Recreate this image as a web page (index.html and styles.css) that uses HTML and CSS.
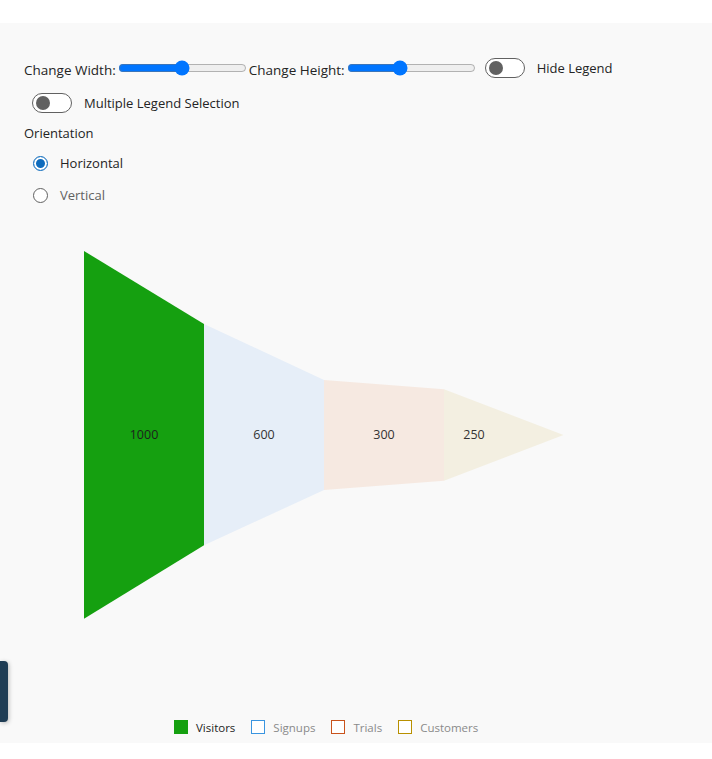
FILE: index.html
```html
<!DOCTYPE html>
<html>
<head>
<meta charset="utf-8">
<link rel="stylesheet" href="styles.css">
</head>
<body>
<div class="panel">
  <div class="row row-top">
    <span class="lbl">Change Width:</span>
    <input class="range" type="range" min="0" max="100" value="50">
    <span class="lbl">Change Height:</span>
    <input class="range" type="range" min="0" max="100" value="40">
    <span class="switch"><span class="knob"></span></span>
    <span class="switch-lbl">Hide Legend</span>
  </div>
  <div class="row row-multi">
    <span class="switch"><span class="knob"></span></span>
    <span class="switch-lbl">Multiple Legend Selection</span>
  </div>
  <div class="orient">Orientation</div>
  <div class="radio-row">
    <span class="radio checked"></span>
    <span class="radio-lbl">Horizontal</span>
  </div>
  <div class="radio-row">
    <span class="radio"></span>
    <span class="radio-lbl muted">Vertical</span>
  </div>
  <svg class="chart" width="712" height="512" viewBox="0 0 712 512">
    <polygon points="84,46 204,119 204,340.3 84,413.7" fill="#15a010"/>
    <polygon points="204,119 324,175 324,285 204,340.3" fill="#e6eef8"/>
    <polygon points="324,175 444,184.3 444,275.7 324,285" fill="#f6e9e1"/>
    <polygon points="444,184.3 563.5,230 444,275.7" fill="#f3efe1"/>
    <text x="144" y="233.5" class="val dark">1000</text>
    <text x="264" y="233.5" class="val">600</text>
    <text x="384" y="233.5" class="val">300</text>
    <text x="474" y="233.5" class="val">250</text>
  </svg>
  <div class="legend">
    <span class="lg-item"><span class="sw sw-green"></span><span class="lg-text on">Visitors</span></span>
    <span class="lg-item"><span class="sw sw-blue"></span><span class="lg-text">Signups</span></span>
    <span class="lg-item"><span class="sw sw-orange"></span><span class="lg-text">Trials</span></span>
    <span class="lg-item"><span class="sw sw-gold"></span><span class="lg-text">Customers</span></span>
  </div>
  <div class="side-tab"></div>
</div>
</body>
</html>
```

FILE: styles.css
```css
html, body {
  margin: 0;
  padding: 0;
  background: #ffffff;
}
body {
  font-family: "Open Sans", "Noto Sans", sans-serif;
  color: #242424;
}
.panel {
  position: relative;
  margin-top: 23px;
  height: 720px;
  background: #f9f9f9;
  box-sizing: border-box;
  padding-top: 34px;
}
.row {
  display: flex;
  align-items: center;
  height: 22px;
}
.row-top {
  padding-left: 24px;
}
.lbl {
  font-size: 13.5px;
  line-height: 22px;
  padding-top: 4px;
  color: #242424;
}
.range {
  width: 129px;
  height: 16px;
  margin: 0 2px;
  padding: 0;
  accent-color: #0075ff;
}
.switch {
  position: relative;
  box-sizing: border-box;
  width: 40px;
  height: 20px;
  border: 1px solid #616161;
  border-radius: 10px;
  background: #ffffff;
  flex: none;
}
.row-top .switch {
  margin-left: 7px;
}
.knob {
  position: absolute;
  left: 3px;
  top: 2px;
  width: 14px;
  height: 14px;
  border-radius: 50%;
  background: #616161;
}
.switch-lbl {
  font-size: 13px;
  margin-left: 12px;
  color: #242424;
}
.row-multi {
  margin-top: 13px;
  padding-left: 32px;
}
.orient {
  margin-top: 8px;
  padding-left: 24px;
  font-size: 13px;
  line-height: 22px;
}
.radio-row {
  display: flex;
  align-items: center;
  height: 20px;
  padding-left: 33px;
  margin-top: 9px;
}
.radio-row + .radio-row {
  margin-top: 12px;
}
.radio {
  box-sizing: border-box;
  width: 15px;
  height: 15px;
  border-radius: 50%;
  border: 1px solid #616161;
  background: #fff;
  flex: none;
}
.radio.checked {
  border-color: #0f6cbd;
  box-shadow: inset 0 0 0 2px #fff, inset 0 0 0 7px #0f6cbd;
}
.radio-lbl {
  margin-left: 12px;
  font-size: 13px;
  color: #242424;
}
.radio-lbl.muted {
  color: #616161;
}
.chart {
  display: block;
}
.val {
  font-family: "Open Sans", "Noto Sans", sans-serif;
  font-size: 12.5px;
  fill: #333333;
  text-anchor: middle;
}
.val.dark {
  fill: #1e1e1e;
}
.legend {
  display: flex;
  justify-content: flex-start;
  align-items: center;
  height: 20px;
  padding-left: 174px;
}
.lg-item {
  display: flex;
  align-items: center;
  margin-right: 16px;
}
.sw {
  box-sizing: border-box;
  width: 14px;
  height: 14px;
  flex: none;
  background: #fff;
}
.sw-green { background: #15a010; }
.sw-blue { border: 1px solid #3a95e0; }
.sw-orange { border: 1px solid #c9531c; }
.sw-gold { border: 1px solid #b89000; }
.lg-text {
  margin-left: 8px;
  font-size: 11.5px;
  color: #8a8a8a;
}
.lg-text.on {
  color: #242424;
}
.side-tab {
  position: absolute;
  left: 0;
  top: 638px;
  width: 8px;
  height: 61px;
  background: #1f3d55;
  border-radius: 0 4px 4px 0;
  box-shadow: 1px 1px 4px rgba(0, 0, 0, 0.25);
}
```
